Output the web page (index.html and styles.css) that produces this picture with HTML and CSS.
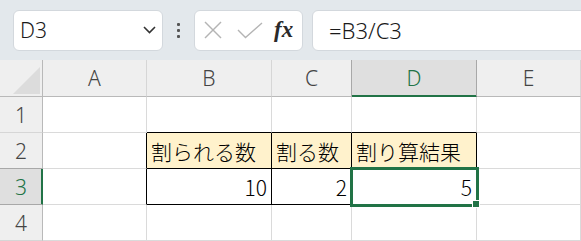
FILE: index.html
```
<!DOCTYPE html>
<html lang="ja">
<head>
    <meta charset="UTF-8">
    <meta name="viewport" content="width=device-width, initial-scale=1.0">
    <title>割り算</title>
    <link rel="stylesheet" href="styles.css">
</head>
<body>

<div class="toolbar">
    <div class="namebox">
        <span>D3</span>
        <svg class="chevron" width="13" height="8" viewBox="0 0 13 8">
            <polyline points="1,1 6.5,6.5 12,1" />
        </svg>
    </div>

    <div class="grip"><i></i><i></i><i></i></div>

    <div class="fx-tools">
        <svg class="icon-x" width="18" height="18" viewBox="0 0 18 18">
            <line x1="1" y1="1" x2="17" y2="17" />
            <line x1="17" y1="1" x2="1" y2="17" />
        </svg>
        <svg class="icon-check" width="26" height="17" viewBox="0 0 26 17">
            <polyline points="1,8 8.5,15.5 25,1" />
        </svg>
        <span class="fx">fx</span>
    </div>

    <div class="formula">=B3/C3</div>
</div>

<div class="sheet">
    <div class="corner"><span class="tri"></span></div>
    <div class="col-head">A</div>
    <div class="col-head">B</div>
    <div class="col-head pre">C</div>
    <div class="col-head active">D</div>
    <div class="col-head">E</div>

    <div class="row-head">1</div>
    <div class="cell"></div>
    <div class="cell tb-top"></div>
    <div class="cell tb-top"></div>
    <div class="cell tb-top"></div>
    <div class="cell"></div>

    <div class="row-head pre">2</div>
    <div class="cell tb-left"></div>
    <div class="cell tb label">割られる数</div>
    <div class="cell tb label">割る数</div>
    <div class="cell tb label">割り算結果</div>
    <div class="cell"></div>

    <div class="row-head active">3</div>
    <div class="cell tb-left"></div>
    <div class="cell tb num">10</div>
    <div class="cell tb num">2</div>
    <div class="cell tb num selected">5<span class="handle"></span></div>
    <div class="cell"></div>

    <div class="row-head">4</div>
    <div class="cell"></div>
    <div class="cell"></div>
    <div class="cell"></div>
    <div class="cell"></div>
    <div class="cell"></div>
</div>

</body>
</html>
```

FILE: styles.css
```
body {
    margin: 0;
    width: 581px;
    height: 241px;
    overflow: hidden;
    background-color: #ffffff;
    font-family: "Noto Sans", "Noto Sans CJK JP", sans-serif;
    color: #222222;
}

/* formula bar */

.toolbar {
    height: 60px;
    background-color: #e3e8ec;
    display: flex;
    align-items: center;
    padding-left: 13px;
    box-sizing: border-box;
    overflow: hidden;
}

.namebox,
.fx-tools,
.formula {
    height: 41px;
    box-sizing: border-box;
    background-color: #ffffff;
    border: 1px solid #d3d8dd;
    border-radius: 6px;
    display: flex;
    align-items: center;
}

.namebox {
    width: 150px;
    padding: 0 6px;
    justify-content: space-between;
    font-size: 21px;
    font-weight: 300;
    color: #1a1a1a;
}

.chevron polyline {
    fill: none;
    stroke: #333333;
    stroke-width: 1.6;
}

.grip {
    display: flex;
    flex-direction: column;
    gap: 3px;
    margin: 0 14px 0 14px;
}

.grip i {
    width: 3px;
    height: 3px;
    background-color: #555555;
    border-radius: 1px;
}

.fx-tools {
    width: 109px;
    padding-left: 9px;
}

.icon-x line,
.icon-check polyline {
    fill: none;
    stroke: #b4b4b4;
    stroke-width: 1.4;
}

.icon-check {
    margin-left: 15px;
}

.fx {
    margin-left: 11px;
    font-family: "Liberation Serif", serif;
    font-style: italic;
    font-weight: bold;
    font-size: 23px;
    color: #2a2a2a;
}

.formula {
    flex: 1;
    margin-left: 9px;
    margin-right: -20px;
    padding-left: 16px;
    font-size: 22px;
    font-weight: 300;
    color: #1a1a1a;
}

/* sheet grid */

.sheet {
    display: grid;
    grid-template-columns: 43px 104px 125px 80px 125px 104px;
    grid-template-rows: 37px repeat(4, 36px);
}

.sheet > div {
    box-sizing: border-box;
    border-right: 1px solid #dadada;
    border-bottom: 1px solid #dadada;
}

.corner {
    background-color: #efefef;
    display: flex;
    justify-content: flex-end;
    align-items: flex-end;
    border-right-color: #b9b9b9 !important;
    border-bottom-color: #b9b9b9 !important;
}

.tri {
    width: 27px;
    height: 27px;
    margin: 0 2px 2px 0;
    background-color: #dcdcdc;
    clip-path: polygon(100% 0, 100% 100%, 0 100%);
}

.col-head,
.row-head {
    background-color: #efefef;
    display: flex;
    align-items: center;
    justify-content: center;
    font-size: 21px;
    font-weight: 300;
    color: #444444;
}

.col-head {
    border-bottom-color: #b9b9b9 !important;
    border-right-color: #d6d6d6 !important;
}

.row-head {
    border-right-color: #b9b9b9 !important;
    border-bottom-color: #d6d6d6 !important;
}

.col-head.pre {
    border-right-color: #a8a8a8 !important;
}

.row-head.pre {
    border-bottom-color: #a8a8a8 !important;
}

.col-head.active {
    background-color: #dfdfdf;
    color: #217346;
    border-right-color: #a8a8a8 !important;
    border-bottom-color: #217346 !important;
    box-shadow: inset 0 -1px 0 #217346;
}

.row-head.active {
    background-color: #dfdfdf;
    color: #217346;
    border-bottom-color: #a8a8a8 !important;
    border-right-color: #217346 !important;
    box-shadow: inset -1px 0 0 #217346;
}

.cell {
    display: flex;
    align-items: center;
    padding: 0 4px;
    font-family: "Noto Sans CJK JP", sans-serif;
    font-size: 21px;
    font-weight: 300;
    color: #000000;
}

.cell.tb {
    border-right-color: #000000;
    border-bottom-color: #000000;
}

.cell.tb-top {
    border-bottom-color: #000000;
}

.cell.tb-left {
    border-right-color: #000000;
}

.cell.label {
    background-color: #fff2cc;
}

.cell.num {
    justify-content: flex-end;
}

.cell.selected {
    position: relative;
}

.cell.selected::after {
    content: "";
    position: absolute;
    top: -2px;
    left: -2px;
    right: -3px;
    bottom: -3px;
    border: 3px solid #217346;
}

.handle {
    position: absolute;
    right: -3px;
    bottom: -3px;
    width: 6px;
    height: 6px;
    background-color: #217346;
    box-shadow: 0 0 0 1px #ffffff;
    z-index: 1;
}
```
